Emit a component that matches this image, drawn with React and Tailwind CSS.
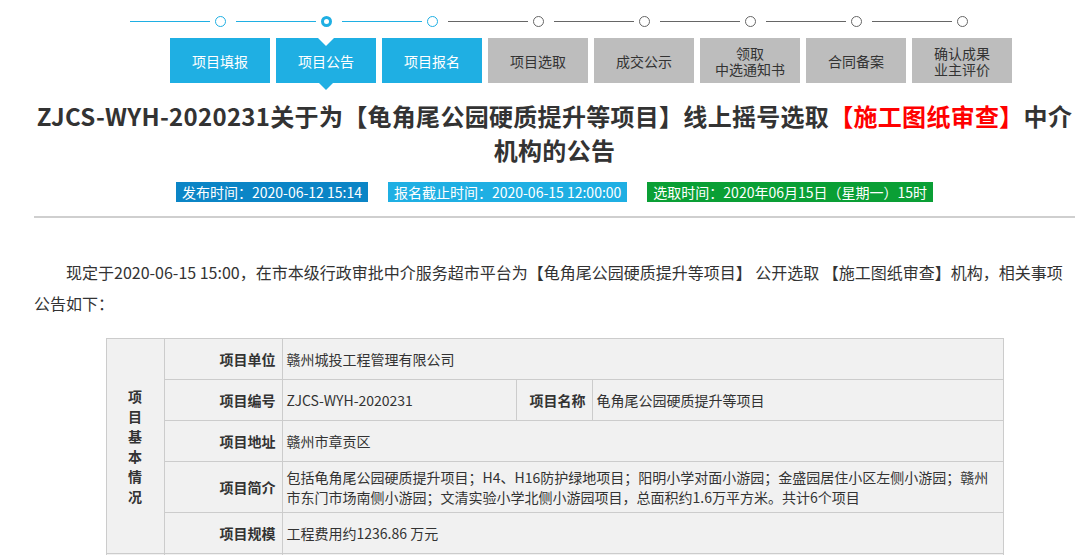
import React from 'react';

const steps = [
  { label: '项目填报', done: true },
  { label: '项目公告', done: true, active: true },
  { label: '项目报名', done: true },
  { label: '项目选取' },
  { label: '成交公示' },
  { label: ['领取', '中选通知书'] },
  { label: '合同备案' },
  { label: ['确认成果', '业主评价'] },
];

const StepLine = () => (
  <div className="flex items-center h-[38px] pt-[4px] pl-[130px]">
    {steps.map((s, i) => (
      <div key={i} className="flex items-center">
        <div className={'w-[80px] h-px ' + (s.done ? 'bg-[#1fafe3]' : 'bg-[#666666]')} />
        <div
          className={
            'ml-[5px] mr-[10px] w-[11px] h-[11px] rounded-full bg-white ' +
            (s.active
              ? 'border-[3px] border-[#1fafe3]'
              : s.done
              ? 'border-[1.5px] border-[#1fafe3]'
              : 'border-[1.5px] border-[#666666]')
          }
        />
      </div>
    ))}
  </div>
);

const StepButtons = () => (
  <div className="flex gap-[6px] pl-[170px]">
    {steps.map((s, i) => (
      <div
        key={i}
        className={
          'relative w-[100px] h-[45px] flex flex-col items-center justify-center text-[14px] leading-[16px] ' +
          (s.done ? 'bg-[#1fafe3] text-white' : 'bg-[#bdbdbd] text-[#333333]')
        }
      >
        {Array.isArray(s.label) ? s.label.map((l) => <span key={l}>{l}</span>) : <span>{s.label}</span>}
        {s.active && (
          <>
            <div className="absolute top-0 left-1/2 -translate-x-1/2 w-0 h-0 border-l-[8px] border-r-[8px] border-t-[8px] border-l-transparent border-r-transparent border-t-white" />
            <div className="absolute top-full left-1/2 -translate-x-1/2 w-0 h-0 border-l-[7px] border-r-[7px] border-t-[7px] border-l-transparent border-r-transparent border-t-[#1fafe3]" />
          </>
        )}
      </div>
    ))}
  </div>
);

const Label = ({ children, className = '' }) => (
  <td className={'border border-[#cccccc] text-right font-bold pr-[6px] pl-[4px] ' + className}>{children}</td>
);

const Value = ({ children, colSpan, className = '' }) => (
  <td colSpan={colSpan} className={'border border-[#cccccc] pl-[4px] pr-[8px] ' + className}>
    {children}
  </td>
);

export default function App() {
  return (
    <div
      className="min-h-screen bg-white text-[#333333]"
      style={{ fontFamily: '"Noto Sans CJK SC", "Noto Sans", sans-serif' }}
    >
      <StepLine />
      <StepButtons />

      <div className="pl-[34px] pr-[6px]">
        <h1 className="mt-[16px] text-center text-[24px] leading-[34px] font-bold text-[#333333] tracking-[0.3px]">
          ZJCS-WYH-2020231关于为【龟角尾公园硬质提升等项目】线上摇号选取
          <span className="text-[#ff0000]">【施工图纸审查】</span>中介机构的公告
        </h1>

        <div className="mt-[15px] flex justify-center gap-[20px] text-[14px] leading-[20px] text-white">
          <span className="bg-[#0b85c6] px-[6px]">发布时间：2020-06-12 15:14</span>
          <span className="bg-[#1fafe3] px-[6px]">报名截止时间：2020-06-15 12:00:00</span>
          <span className="bg-[#0a9f35] px-[6px]">选取时间：2020年06月15日（星期一）15时</span>
        </div>

        <div className="mt-[14px] border-t-2 border-[#cfcfcf]" />

        <p className="mt-[39px] text-[16px] leading-[31px] indent-[32px] text-[#333333]">
          现定于2020-06-15 15:00，在市本级行政审批中介服务超市平台为【龟角尾公园硬质提升等项目】 公开选取 【施工图纸审查】机构，相关事项公告如下：
        </p>

        <table className="mt-[19px] mx-auto w-[898px] table-fixed border-collapse text-[14px] leading-[20px] bg-[#f1f1f1] text-[#333333]">
          <colgroup>
            <col className="w-[58px]" />
            <col className="w-[118px]" />
            <col className="w-[234px]" />
            <col className="w-[76px]" />
            <col />
          </colgroup>
          <tbody>
            <tr className="h-[41px]">
              <td rowSpan={5} className="border border-[#cccccc] text-center font-bold">
                <div className="mx-auto w-[16px] leading-[20px]">项目基本情况</div>
              </td>
              <Label>项目单位</Label>
              <Value colSpan={3}>赣州城投工程管理有限公司</Value>
            </tr>
            <tr className="h-[41px]">
              <Label>项目编号</Label>
              <Value>ZJCS-WYH-2020231</Value>
              <Label>项目名称</Label>
              <Value>龟角尾公园硬质提升等项目</Value>
            </tr>
            <tr className="h-[41px]">
              <Label>项目地址</Label>
              <Value colSpan={3}>赣州市章贡区</Value>
            </tr>
            <tr className="h-[51px]">
              <Label>项目简介</Label>
              <Value colSpan={3} className="py-[5px]">
                包括龟角尾公园硬质提升项目；H4、H16防护绿地项目；阳明小学对面小游园；金盛园居住小区左侧小游园；赣州市东门市场南侧小游园；文清实验小学北侧小游园项目，总面积约1.6万平方米。共计6个项目
              </Value>
            </tr>
            <tr className="h-[41px]">
              <Label>项目规模</Label>
              <Value colSpan={3}>工程费用约1236.86 万元</Value>
            </tr>
            <tr className="h-[41px]">
              <td className="border border-[#cccccc]" />
              <td className="border border-[#cccccc]" />
              <td colSpan={3} className="border border-[#cccccc]" />
            </tr>
          </tbody>
        </table>
      </div>
    </div>
  );
}
